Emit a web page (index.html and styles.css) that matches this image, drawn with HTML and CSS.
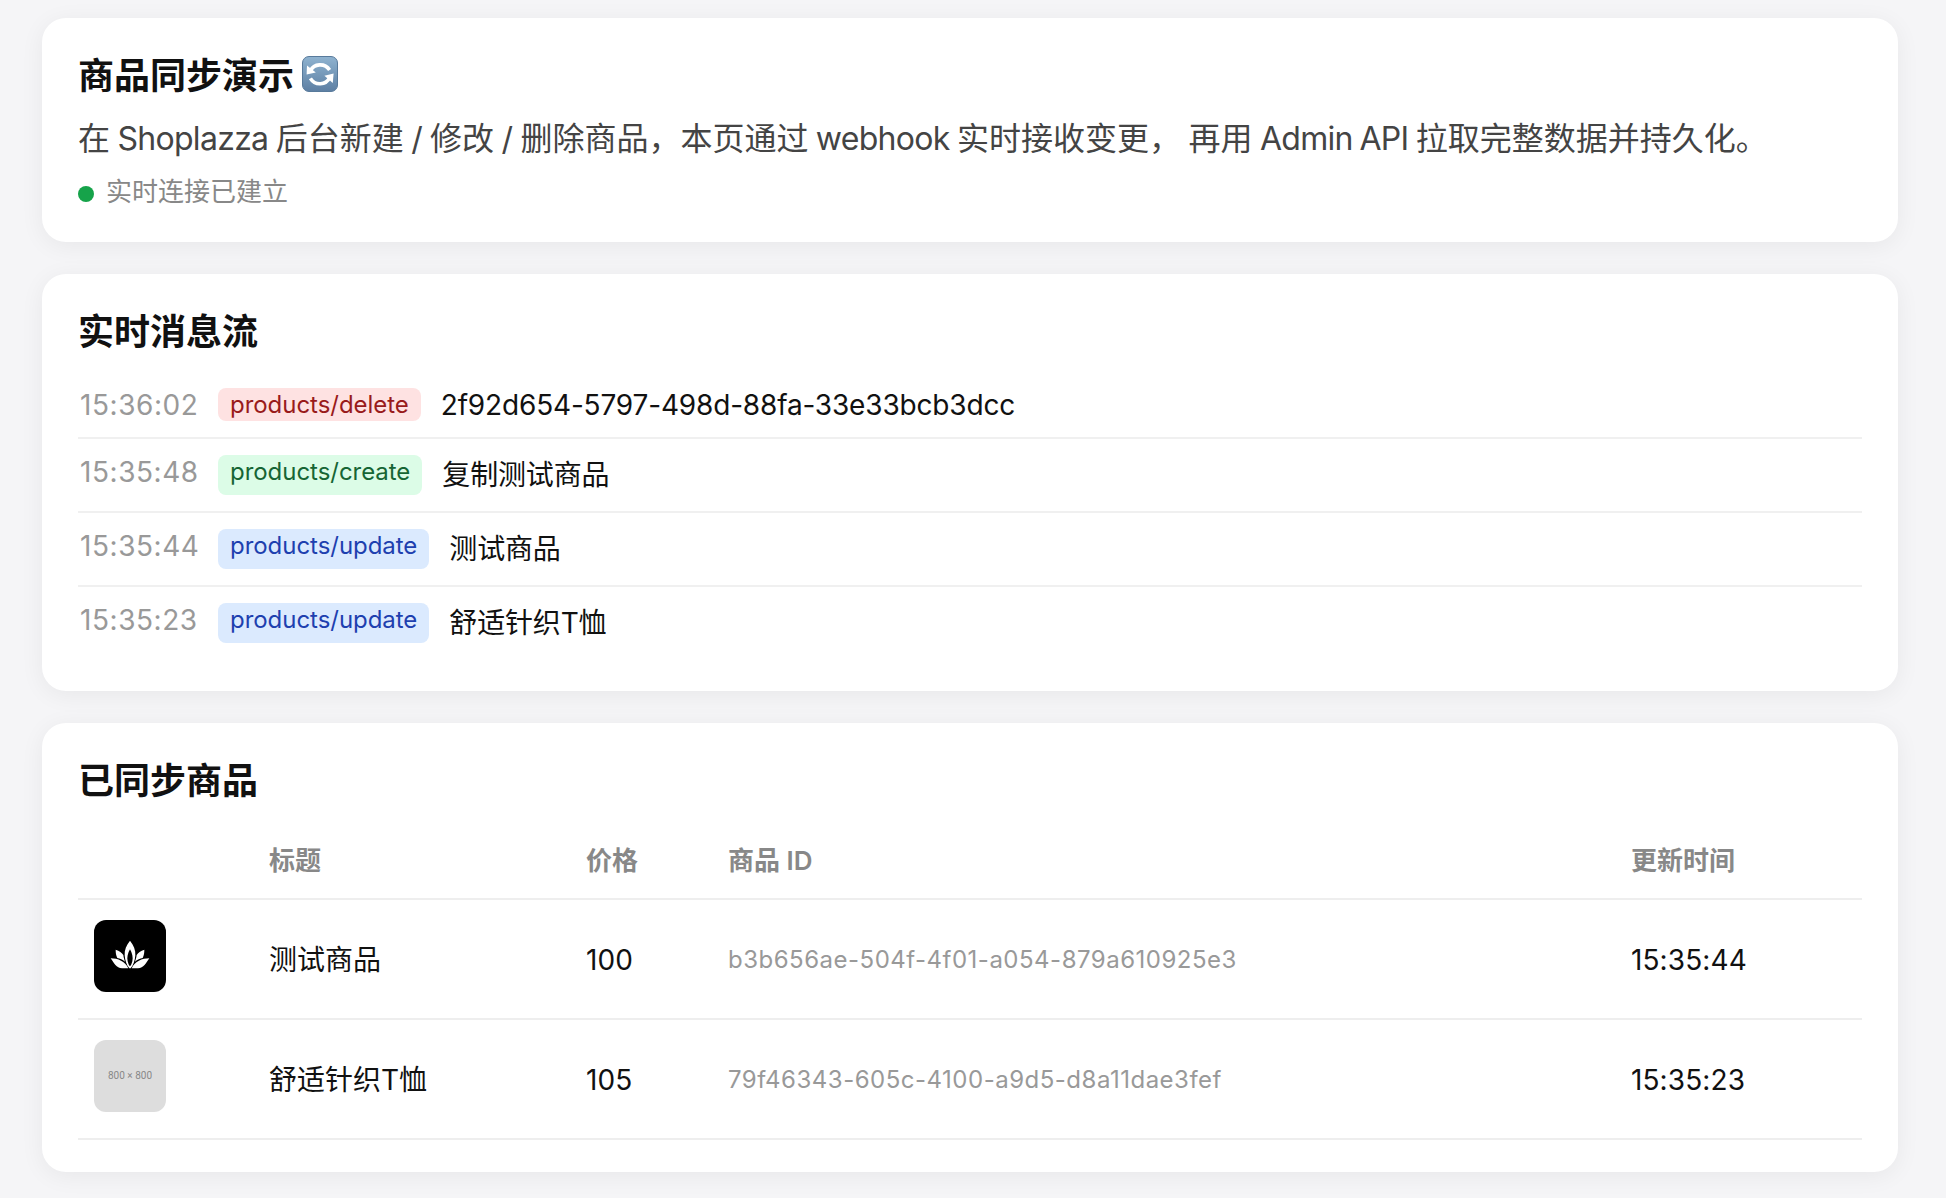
FILE: index.html
```html
<!DOCTYPE html>
<html lang="zh-CN">
<head>
    <meta charset="UTF-8">
    <meta name="viewport" content="width=device-width, initial-scale=1.0">
    <title>商品同步演示</title>
    <link rel="stylesheet" href="styles.css">
</head>
<body>
    <!-- 页头 -->
    <div class="card">
        <h2>商品同步演示
            <svg class="sync-icon" viewBox="0 0 36 36" aria-hidden="true">
                <defs>
                    <linearGradient id="syncBg" x1="0" y1="0" x2="0" y2="1">
                        <stop offset="0" stop-color="#8fb3d0"/>
                        <stop offset="1" stop-color="#5d7fa3"/>
                    </linearGradient>
                </defs>
                <rect x="0.5" y="0.5" width="35" height="35" rx="6.5" fill="url(#syncBg)" stroke="#587a9b"/>
                <g fill="none" stroke="#fff" stroke-width="3.6">
                    <path d="M8.6 14.6C11.8 7.8 22.6 6.4 27.6 14"/>
                    <path d="M27.6 21.8C24 29.4 13 30 8.4 22.4"/>
                </g>
                <path d="M5 9.4L4.6 18.4L13.8 16.6Z" fill="#fff"/>
                <path d="M31.6 17.6L22.4 19.8L30.8 27Z" fill="#fff"/>
            </svg>
        </h2>
        <p class="desc">在 <span class="en">Shoplazza</span> 后台新建 / 修改 / 删除商品，本页通过 <span class="en">webhook</span> 实时接收变更，
            再用 <span class="en">Admin API</span> 拉取完整数据并持久化。</p>
        <div class="status"><span class="dot"></span>实时连接已建立</div>
    </div>

    <!-- 消息流 -->
    <div class="card">
        <h2>实时消息流</h2>
        <div class="event">
            <span class="time">15:36:02</span>
            <span class="tag delete">products/delete</span>
            <span class="name">2f92d654-5797-498d-88fa-33e33bcb3dcc</span>
        </div>
        <div class="event">
            <span class="time">15:35:48</span>
            <span class="tag create">products/create</span>
            <span class="name zh">复制测试商品</span>
        </div>
        <div class="event">
            <span class="time">15:35:44</span>
            <span class="tag update">products/update</span>
            <span class="name zh">测试商品</span>
        </div>
        <div class="event">
            <span class="time">15:35:23</span>
            <span class="tag update">products/update</span>
            <span class="name zh">舒适针织T恤</span>
        </div>
    </div>

    <!-- 商品列表 -->
    <div class="card">
        <h2>已同步商品</h2>
        <table class="products">
            <colgroup>
                <col class="col-img">
                <col class="col-title">
                <col class="col-price">
                <col class="col-id">
                <col class="col-time">
            </colgroup>
            <thead>
                <tr>
                    <th></th>
                    <th>标题</th>
                    <th>价格</th>
                    <th>商品 ID</th>
                    <th>更新时间</th>
                </tr>
            </thead>
            <tbody>
                <tr>
                    <td class="img-cell">
                        <svg class="thumb thumb-dark" viewBox="0 0 216 216" aria-hidden="true">
                            <g fill="#fff">
                                <path fill-rule="evenodd" d="M108 62C97 76 91 90 92 106C93 122 98 136 106 145H110C118 136 123 122 124 106C125 90 119 76 108 62ZM108 88C114 98 118 112 115 124C113 132 111 136 108 139C105 136 103 132 101 124C98 112 102 98 108 88Z"/>
                                <path d="M65 89C76 93 84 98 88 105C89 113 91 119 93 125C86 119 78 115 70 114C66 106 65 98 65 89Z"/>
                                <path d="M151 89C140 93 132 98 128 105C127 113 125 119 123 125C130 119 138 115 146 114C150 106 151 98 151 89Z"/>
                                <path d="M50 115C72 115 93 124 103 145H84C67 144 60 129 50 115Z"/>
                                <path d="M166 115C144 115 123 124 113 145H132C149 144 156 129 166 115Z"/>
                            </g>
                        </svg>
                    </td>
                    <td class="zh">测试商品</td>
                    <td class="num">100</td>
                    <td class="pid">b3b656ae-504f-4f01-a054-879a610925e3</td>
                    <td class="num">15:35:44</td>
                </tr>
                <tr>
                    <td class="img-cell"><div class="thumb placeholder">800 × 800</div></td>
                    <td class="zh">舒适针织T恤</td>
                    <td class="num">105</td>
                    <td class="pid">79f46343-605c-4100-a9d5-d8a11dae3fef</td>
                    <td class="num">15:35:23</td>
                </tr>
            </tbody>
        </table>
    </div>
</body>
</html>
```

FILE: styles.css
```css
* {
    margin: 0;
    padding: 0;
    box-sizing: border-box;
}

body {
    font-family: Inter, 'Noto Sans CJK SC', sans-serif;
    font-size: 28px;
    background: #f5f5f7;
    color: #111;
    min-height: 100vh;
    padding: 18px 48px 0 42px;
}

.card {
    background: #fff;
    border-radius: 24px;
    padding: 32px 36px;
    margin-bottom: 32px;
    box-shadow: 0 4px 24px rgba(0,0,0,0.06);
}

.card:last-child {
    margin-bottom: 0;
}

.card h2 {
    display: flex;
    align-items: center;
    gap: 8px;
    font-size: 36px;
    font-weight: 600;
    line-height: 50px;
    height: 50px;
    padding-top: 2px;
    margin-bottom: 16px;
}

.sync-icon {
    width: 36px;
    height: 36px;
    margin-bottom: 4px;
}

.desc {
    font-size: 32px;
    line-height: 45px;
    color: #444;
    white-space: nowrap;
    word-spacing: -1.6px;
}

.desc .en {
    letter-spacing: -0.7px;
}

.status {
    display: flex;
    align-items: center;
    gap: 12px;
    margin-top: 12px;
    font-size: 26px;
    line-height: 37px;
    color: #888;
}

.dot {
    width: 16px;
    height: 16px;
    border-radius: 50%;
    background: #16a34a;
    margin-top: 5px;
}

/* 消息流 */
.event {
    display: flex;
    gap: 20px;
    padding: 16px 0;
    border-bottom: 2px solid #f0f0f0;
    line-height: 35px;
}

.event:last-child {
    border-bottom: none;
}

.time {
    width: 120px;
    height: 33px;
    padding-left: 2px;
    color: #999;
    letter-spacing: 0.55px;
}

.tag {
    padding: 2px 12px;
    border-radius: 8px;
    font-size: 24px;
    line-height: 29px;
    letter-spacing: -0.04px;
}

.tag.delete {
    background: #fee2e2;
    color: #991b1b;
}

.tag.create {
    background: #dcfce7;
    color: #166534;
}

.tag.update {
    background: #dbeafe;
    color: #1e40af;
}

.name {
    height: 33px;
    letter-spacing: -0.17px;
}

.name.zh {
    height: 40px;
    line-height: 41px;
}

/* 商品表格 */
.products {
    width: 100%;
    border-collapse: separate;
    border-spacing: 0;
    table-layout: fixed;
}

.products th,
.products td {
    text-align: left;
    vertical-align: middle;
    padding: 0 16px;
    border-bottom: 2px solid #eee;
}

.products th {
    height: 79px;
    font-size: 26px;
    font-weight: 600;
    color: #888;
    padding-bottom: 3px;
}

.products td {
    height: 120px;
}

.products .zh {
    padding-bottom: 2px;
}

.col-img { width: 175px; }
.col-title { width: 317px; }
.col-price { width: 142px; }
.col-time { width: 247px; }

.products .img-cell {
    vertical-align: top;
    padding-top: 20px;
}

.products .num {
    padding-top: 2px;
    letter-spacing: 0.1px;
}

.thumb {
    display: block;
    width: 72px;
    height: 72px;
    border-radius: 12px;
}

.thumb-dark {
    background: #000;
}

.placeholder {
    background: #ddd;
    color: #888;
    font-family: Roboto, sans-serif;
    font-size: 10px;
    line-height: 72px;
    text-align: center;
}

.products .pid {
    font-size: 24px;
    color: #999;
    letter-spacing: 0.5px;
}
```
